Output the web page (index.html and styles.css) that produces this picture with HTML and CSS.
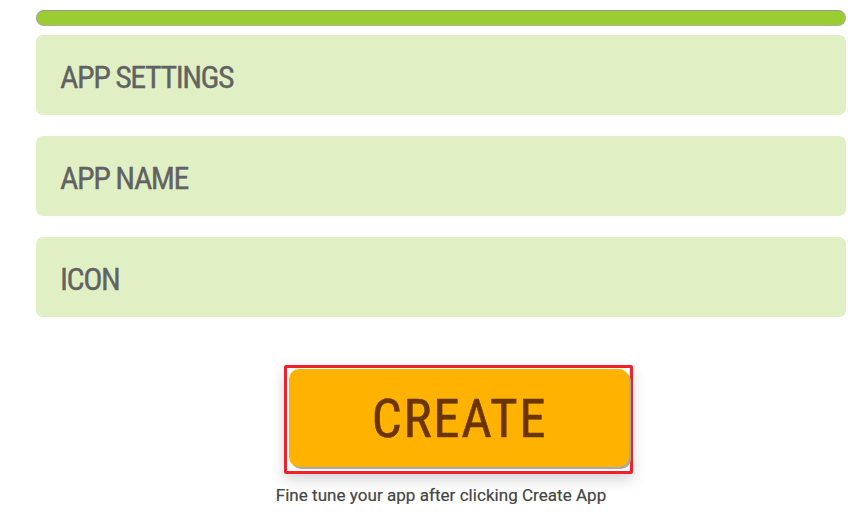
FILE: index.html
```html
<!DOCTYPE html>
<html>
<head>
<meta charset="utf-8">
<link rel="stylesheet" href="styles.css">
</head>
<body>
<div class="page">
  <div class="progress"><div class="progress-fill"></div></div>
  <div class="section"><span class="section-title">APP SETTINGS</span></div>
  <div class="section"><span class="section-title">APP NAME</span></div>
  <div class="section"><span class="section-title">ICON</span></div>
  <div class="actions">
    <div class="highlight">
      <button class="create-btn">CREATE</button>
    </div>
    <p class="hint">Fine tune your app after clicking Create App</p>
  </div>
</div>
</body>
</html>
```
FILE: styles.css
```css
html, body {
  margin: 0;
  padding: 0;
  background: #ffffff;
}
.page {
  width: 810px;
  margin-left: 36px;
  padding-top: 10px;
  display: flex;
  flex-direction: column;
  font-family: Roboto, "Liberation Sans", sans-serif;
}
.progress {
  height: 14px;
  border-radius: 8px;
  border: 1px solid #a9b3a0;
  border-top-color: #9a9a9a;
  border-left-color: #a0a0a0;
  background: #9acd32;
  overflow: hidden;
}
.progress-fill {
  width: 100%;
  height: 100%;
}
.section {
  margin-top: 9px;
  height: 80px;
  border-radius: 7px;
  background: #e0f0c4;
  display: flex;
  align-items: center;
  padding-left: 24px;
}
.section + .section {
  margin-top: 21px;
}
.section-title {
  color: #626262;
  font-size: 32px;
  font-weight: 400;
  font-stretch: 75%;
  letter-spacing: -1.5px;
  padding-top: 3px;
  -webkit-text-stroke: 0.3px #626262;
}
.actions {
  display: flex;
  flex-direction: column;
  align-items: center;
  margin-top: 48px;
}
.highlight {
  border: 3px solid #ee2229;
  border-radius: 2px;
  padding: 1px 1px 4px 2px;
  margin-left: 34px;
  box-shadow: 0 6px 14px rgba(0, 0, 0, 0.16);
}
.create-btn {
  display: block;
  width: 340px;
  height: 98px;
  border: none;
  border-radius: 10px;
  background: #ffb300;
  color: #6b3500;
  font-family: Roboto, "Liberation Sans", sans-serif;
  font-size: 53px;
  font-weight: 400;
  font-stretch: 75%;
  letter-spacing: 1.6px;
  padding: 2px 0 0 2px;
  -webkit-text-stroke: 0.5px #6b3500;
  box-shadow: 2px 2px 0 #a9a9a9;
}
.hint {
  margin: 11px 0 0 0;
  color: #454545;
  font-size: 17px;
  font-weight: 400;
  letter-spacing: 0.04px;
  -webkit-text-stroke: 0.2px #454545;
}
```
